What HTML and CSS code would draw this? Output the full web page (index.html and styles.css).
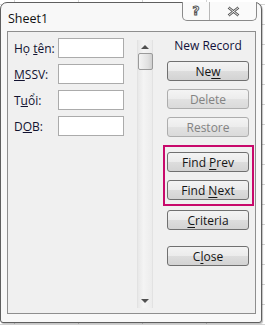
FILE: index.html
```html
<!DOCTYPE html>
<html lang="vi">
<head>
    <meta charset="UTF-8">
    <title>Sheet1</title>
    <link rel="stylesheet" href="styles.css">
</head>
<body>
    <div class="grid"></div>
    <div class="window">
        <div class="titlebar">
            <span class="title">Sheet1</span>
            <div class="caption-buttons">
                <span class="cap cap-help">?</span>
                <span class="cap cap-close">
                    <svg width="13" height="11" viewBox="0 0 13 11">
                        <path d="M1.5 1.5 L11.5 9.5 M11.5 1.5 L1.5 9.5" stroke="#555" stroke-width="2.6" fill="none"/>
                        <path d="M1.5 1.5 L11.5 9.5 M11.5 1.5 L1.5 9.5" stroke="#fff" stroke-width="0.9" fill="none"/>
                    </svg>
                </span>
            </div>
        </div>
        <div class="panel">
            <div class="fields">
                <div class="field">
                    <label>Họ <u>t</u>ên:</label>
                    <input type="text">
                </div>
                <div class="field">
                    <label><u>M</u>SSV:</label>
                    <input type="text">
                </div>
                <div class="field">
                    <label>T<u>u</u>ổi:</label>
                    <input type="text">
                </div>
                <div class="field">
                    <label>D<u>O</u>B:</label>
                    <input type="text">
                </div>
            </div>
            <div class="scrollbar">
                <span class="arrow arrow-up"></span>
                <span class="thumb"></span>
                <span class="arrow arrow-down"></span>
            </div>
            <div class="actions">
                <div class="record">New Record</div>
                <button class="btn">Ne<u>w</u></button>
                <button class="btn disabled">Delete</button>
                <button class="btn disabled">Restore</button>
                <div class="highlight">
                    <button class="btn">Find <u>P</u>rev</button>
                    <button class="btn">Find <u>N</u>ext</button>
                </div>
                <button class="btn"><u>C</u>riteria</button>
                <button class="btn btn-close">C<u>l</u>ose</button>
            </div>
        </div>
    </div>
</body>
</html>
```

FILE: styles.css
```css
body {
    margin: 0;
    width: 265px;
    height: 325px;
    overflow: hidden;
    background: #fff;
    font-family: "Open Sans", "Noto Sans", sans-serif;
    font-size: 12px;
    color: #1e1e1e;
    position: relative;
}

.grid {
    position: absolute;
    inset: 0;
    background-image:
        linear-gradient(to right, #d4d4d4 1px, transparent 1px),
        linear-gradient(to bottom, #d4d4d4 1px, transparent 1px);
    background-size: 64px 20px;
    background-position: 14px 4px;
}

.window {
    position: absolute;
    left: 0;
    top: 2px;
    width: 260px;
    height: 319px;
    background: #f8f8f8;
    border: 1px solid #5f5f5f;
    border-radius: 7px 7px 3px 3px;
    box-shadow: 1px 1px 1px rgba(0, 0, 0, 0.25);
}

.titlebar {
    height: 28px;
    display: flex;
    justify-content: space-between;
    align-items: flex-start;
}

.title {
    margin: 7px 0 0 7px;
    font-size: 12.5px;
    color: #111;
}

.caption-buttons {
    display: flex;
    margin-right: 4px;
    margin-top: -1px;
    border: 1px solid #8a8a8a;
    border-top: none;
    border-radius: 0 0 5px 5px;
    height: 18px;
    background: #fafafa;
}

.cap {
    display: flex;
    align-items: center;
    justify-content: center;
}

.cap-help {
    width: 26px;
    border-right: 1px solid #b8b8b8;
    font-family: "DejaVu Sans", sans-serif;
    font-weight: bold;
    font-size: 12px;
    color: #fff;
    -webkit-text-stroke: 1px #555;
}

.cap-close {
    width: 46px;
}

.panel {
    margin-left: 6px;
    width: 247px;
    height: 281px;
    background: #f0f0f0;
    border: 1px solid #8e8e8e;
    display: flex;
}

.fields {
    padding: 6px 0 0 6px;
    display: flex;
    flex-direction: column;
    gap: 6px;
    width: 122px;
}

.field {
    display: flex;
    align-items: center;
    height: 20px;
}

.field label {
    width: 44px;
    color: #121230;
}

.field input {
    width: 66px;
    height: 20px;
    box-sizing: border-box;
    border: 1px solid #ababab;
    background: #fff;
    margin: 0;
    padding: 0;
}

.scrollbar {
    margin: 8px 0 5px 1px;
    width: 14px;
    background: linear-gradient(to right, #e8e8e8, #f4f4f4 40%, #ececec);
    border-left: 1px solid #e2e2e2;
    border-right: 1px solid #e2e2e2;
    display: flex;
    flex-direction: column;
    align-items: center;
}

.arrow {
    width: 0;
    height: 0;
    border-left: 4px solid transparent;
    border-right: 4px solid transparent;
}

.arrow-up {
    margin-top: 5px;
    border-bottom: 4px solid #505050;
}

.arrow-down {
    margin-top: auto;
    margin-bottom: 5px;
    border-top: 4px solid #505050;
}

.thumb {
    margin-top: 4px;
    width: 13px;
    height: 15px;
    border: 1px solid #9a9a9a;
    border-radius: 2px;
    background: linear-gradient(to right, #f4f4f4, #e0e0e0 70%, #cfcfcf);
}

.actions {
    margin-left: 14px;
    width: 82px;
    display: flex;
    flex-direction: column;
    align-items: center;
}

.record {
    margin-top: 6px;
    height: 16px;
    line-height: 16px;
    color: #10103a;
}

.btn {
    width: 82px;
    height: 20px;
    box-sizing: border-box;
    margin-top: 8px;
    padding: 0;
    font-family: inherit;
    font-size: 12px;
    color: #151515;
    border: 1px solid #707070;
    border-radius: 3px;
    background: linear-gradient(to bottom, #f3f3f3, #ebebeb 50%, #dddddd 51%, #d3d3d3);
}

.record + .btn {
    margin-top: 7px;
}

.btn.disabled {
    color: #838383;
    border-color: #adadad;
    background: linear-gradient(to bottom, #f4f4f4, #ececec 50%, #e2e2e2 51%, #dadada);
}

.btn u {
    text-underline-offset: 2px;
}

.highlight {
    margin-top: 8px;
    width: 87px;
    padding: 5px 0 4px;
    border: 2px solid #c8096b;
    display: flex;
    flex-direction: column;
    align-items: center;
}

.highlight .btn:first-child {
    margin-top: 0;
}

.highlight + .btn {
    margin-top: 4px;
}

.btn-close {
    margin-top: 16px;
}
```
